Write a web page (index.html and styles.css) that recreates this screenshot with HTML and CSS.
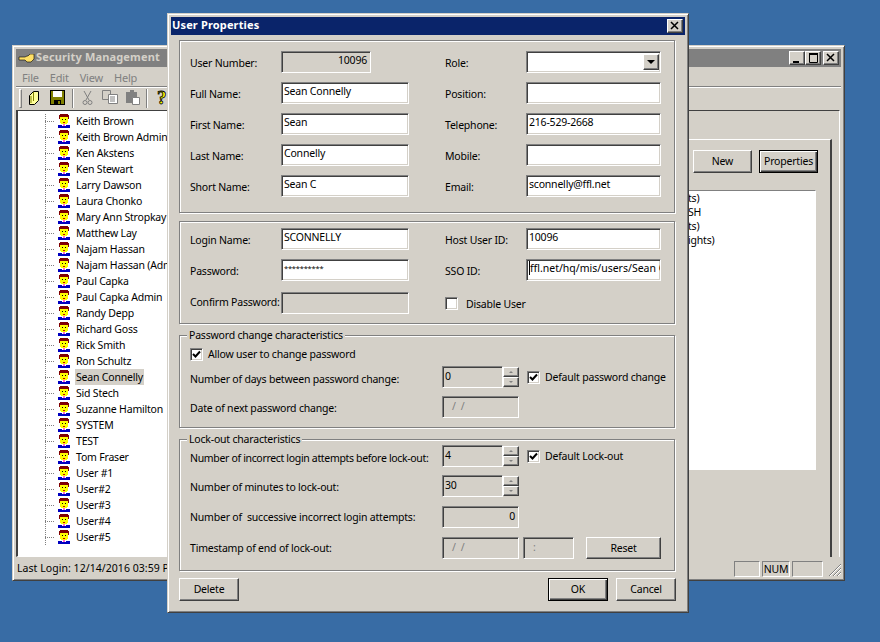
FILE: index.html
```html
<!DOCTYPE html>
<html lang="en">
<head>
<meta charset="utf-8">
<title>User Properties</title>
<link rel="stylesheet" href="styles.css">
</head>
<body>
<svg class="defs" width="0" height="0" aria-hidden="true">
  <symbol id="person" viewBox="0 0 14 14">
    <path fill="#800000" d="M3 0h8v1h1v4h-1V3H3v2H2V1h1z"/>
    <path fill="#ffff00" d="M3 3h8v6h-1v1H4V9H3z"/>
    <path fill="#000" d="M5 5h1v1H5zM8 5h1v1H8z"/>
    <path fill="#c00000" d="M6 8h2v1H6z"/>
    <path fill="#0000c0" d="M1 11h4v1h4v-1h4v3H1z"/>
    <path fill="#ff66cc" d="M6 10h2v2H6z"/>
  </symbol>
</svg>

<section class="win main">
  <header class="title inactive">
    <svg class="key" width="17" height="9" viewBox="0 0 17 9"><path fill="#ffe066" stroke="#000" stroke-width=".6" d="M1 3h6l2-1h1l2-2h4v5l-3 3H9L7 6H1z"/></svg>
    <span class="title-text">Security Management</span>
    <span class="caption-btns">
      <span class="cap">
        <svg width="14" height="12" viewBox="0 0 14 12"><path d="M3 9h6v2H3z"/></svg>
      </span>
      <span class="cap">
        <svg width="14" height="12" viewBox="0 0 14 12"><path fill="none" stroke="#000" d="M3.5 2.5h8v8h-8z"/><path d="M3 1h9v2H3z"/></svg>
      </span>
      <span class="cap cap-close">
        <svg width="14" height="12" viewBox="0 0 14 12"><path stroke="#000" stroke-width="1.5" d="M3 2l7 7M10 2l-7 7"/></svg>
      </span>
    </span>
  </header>
  <nav class="menu"><span>File</span><span>Edit</span><span>View</span><span>Help</span></nav>
  <div class="toolbar">
    <span class="grip"></span>
    <svg class="tool t-open" width="12" height="16" viewBox="0 0 12 16"><path fill="#ffff99" stroke="#000" d="M1.500 5.500l4-4h5v9l-4 4h-5z"/><path fill="none" stroke="#808000" d="M5.500 2v9M3 6v7"/></svg>
    <svg class="tool t-save" width="15" height="15" viewBox="0 0 15 15"><path fill="#000" d="M0 0h15v15H0z"/><path fill="#808000" d="M1 1h13v13H1z"/><path fill="#fff" d="M3 1h9v6H3z"/><path fill="#000" d="M4 10h7v4H4z"/><path fill="#808000" d="M8 11h2v3H8z"/></svg>
    <span class="tsep s1"></span>
    <svg class="tool t-cut" width="11" height="16" viewBox="0 0 11 16"><path fill="none" stroke="#808080" d="M2 1l5 9M9 1L4 10"/><circle cx="3" cy="12.500" r="2" fill="none" stroke="#808080"/><circle cx="8" cy="12.500" r="2" fill="none" stroke="#808080"/></svg>
    <svg class="tool t-copy" width="16" height="14" viewBox="0 0 16 14"><path fill="#d4d0c8" stroke="#808080" d="M.5.5h8v9h-8z"/><path fill="#fff" stroke="#808080" d="M6.500 4.500h9v9h-9z"/><path stroke="#808080" d="M8 7h5M8 9h5M8 11h5"/></svg>
    <svg class="tool t-paste" width="15" height="15" viewBox="0 0 15 15"><path fill="#808080" d="M1 2h4V0h4v2h3v11H1z"/><path fill="#fff" stroke="#808080" d="M7.500 7.500h7v7h-7z"/></svg>
    <span class="tsep s2"></span>
    <span class="help">?</span>
  </div>
  <div class="client">
    <div class="tree">
      <ul class="tree-list">
        <li><svg><use href="#person"/></svg><span>Keith Brown</span></li>
        <li><svg><use href="#person"/></svg><span>Keith Brown Admin</span></li>
        <li><svg><use href="#person"/></svg><span>Ken Akstens</span></li>
        <li><svg><use href="#person"/></svg><span>Ken Stewart</span></li>
        <li><svg><use href="#person"/></svg><span>Larry Dawson</span></li>
        <li><svg><use href="#person"/></svg><span>Laura Chonko</span></li>
        <li><svg><use href="#person"/></svg><span>Mary Ann Stropkay</span></li>
        <li><svg><use href="#person"/></svg><span>Matthew Lay</span></li>
        <li><svg><use href="#person"/></svg><span>Najam Hassan</span></li>
        <li><svg><use href="#person"/></svg><span>Najam Hassan (Admin)</span></li>
        <li><svg><use href="#person"/></svg><span>Paul Capka</span></li>
        <li><svg><use href="#person"/></svg><span>Paul Capka Admin</span></li>
        <li><svg><use href="#person"/></svg><span>Randy Depp</span></li>
        <li><svg><use href="#person"/></svg><span>Richard Goss</span></li>
        <li><svg><use href="#person"/></svg><span>Rick Smith</span></li>
        <li><svg><use href="#person"/></svg><span>Ron Schultz</span></li>
        <li class="sel"><svg><use href="#person"/></svg><span>Sean Connelly</span></li>
        <li><svg><use href="#person"/></svg><span>Sid Stech</span></li>
        <li><svg><use href="#person"/></svg><span>Suzanne Hamilton</span></li>
        <li><svg><use href="#person"/></svg><span>SYSTEM</span></li>
        <li><svg><use href="#person"/></svg><span>TEST</span></li>
        <li><svg><use href="#person"/></svg><span>Tom Fraser</span></li>
        <li><svg><use href="#person"/></svg><span>User #1</span></li>
        <li><svg><use href="#person"/></svg><span>User#2</span></li>
        <li><svg><use href="#person"/></svg><span>User#3</span></li>
        <li><svg><use href="#person"/></svg><span>User#4</span></li>
        <li><svg><use href="#person"/></svg><span>User#5</span></li>
      </ul>
    </div>
    <div class="pane">
      <div class="tabpage">
        <div class="panel">
          <div class="panel-btns">
            <span class="btn pbtn">New</span>
            <span class="btn pbtn default">Properties</span>
          </div>
          <div class="listbox">
            <div>ts)</div><div>SH</div><div>ts)</div><div>ights)</div>
          </div>
        </div>
      </div>
    </div>
  </div>
  <footer class="status">
    <span class="status-main">Last Login: 12/14/2016 03:59 PM</span>
    <span class="spanel p1"></span>
    <span class="spanel p2">NUM</span>
    <span class="spanel p3"></span>
    <svg class="size-grip" width="12" height="12" viewBox="0 0 12 12"><path stroke="#808080" d="M0 12L12 0M4 12l8-8M8 12l4-4"/><path stroke="#fff" d="M1 12L12 1M5 12l7-7M9 12l3-3"/></svg>
  </footer>
</section>

<section class="win dialog">
  <header class="title active">
    <span class="title-text">User Properties</span>
    <span class="caption-btns">
      <span class="cap cap-dlg">
        <svg width="14" height="12" viewBox="0 0 14 12"><path stroke="#000" stroke-width="1.5" d="M3 2l7 7M10 2l-7 7"/></svg>
      </span>
    </span>
  </header>
  <div class="dlg-body">
    <div class="group g-user">
      <div class="col">
        <label>User Number:</label><div class="field disabled num">10096</div>
        <label>Full Name:</label><div class="field">Sean Connelly</div>
        <label>First Name:</label><div class="field">Sean</div>
        <label>Last Name:</label><div class="field">Connelly</div>
        <label>Short Name:</label><div class="field">Sean C</div>
      </div>
      <div class="col col-r">
        <label>Role:</label><div class="field combo"><span class="combo-btn"><i class="arrow"></i></span></div>
        <label>Position:</label><div class="field"></div>
        <label>Telephone:</label><div class="field">216-529-2668</div>
        <label>Mobile:</label><div class="field"></div>
        <label>Email:</label><div class="field">sconnelly@ffl.net</div>
      </div>
    </div>
    <div class="group g-login">
      <div class="col">
        <label>Login Name:</label><div class="field">SCONNELLY</div>
        <label>Password:</label><div class="field pw">**********</div>
        <label>Confirm Password:</label><div class="field disabled confirm"></div>
      </div>
      <div class="col col-r">
        <label>Host User ID:</label><div class="field">10096</div>
        <label>SSO ID:</label><div class="field sso"><span class="caret">ffl.net/hq/mis/users/Sean C</span></div>
        <div class="check-row"><span class="check"></span><span>Disable User</span></div>
      </div>
    </div>
    <fieldset class="fgroup g-pass">
      <legend>Password change characteristics</legend>
      <div class="check-row allow"><span class="check on"><svg width="11" height="11" viewBox="0 0 11 11"><path fill="none" stroke="#000" stroke-width="2" d="M2 5l2.500 2.500L9 2.500"/></svg></span><span>Allow user to change password</span></div>
      <div class="row">
        <label class="low">Number of days between password change:</label>
        <div class="spin"><div class="field disabled">0</div><div class="spin-btns"><span class="sb"><i class="up"></i></span><span class="sb"><i class="down"></i></span></div></div>
        <div class="check-row"><span class="check on"><svg width="11" height="11" viewBox="0 0 11 11"><path fill="none" stroke="#000" stroke-width="2" d="M2 5l2.500 2.500L9 2.500"/></svg></span><span>Default password change</span></div>
      </div>
      <div class="row">
        <label>Date of next password change:</label>
        <div class="field disabled date">/ &nbsp;/</div>
      </div>
    </fieldset>
    <fieldset class="fgroup g-lock">
      <legend>Lock-out characteristics</legend>
      <div class="row">
        <label class="tight low">Number of incorrect login attempts before lock-out:</label>
        <div class="spin"><div class="field disabled">4</div><div class="spin-btns"><span class="sb"><i class="up"></i></span><span class="sb"><i class="down"></i></span></div></div>
        <div class="check-row"><span class="check on"><svg width="11" height="11" viewBox="0 0 11 11"><path fill="none" stroke="#000" stroke-width="2" d="M2 5l2.500 2.500L9 2.500"/></svg></span><span>Default Lock-out</span></div>
      </div>
      <div class="row">
        <label>Number of minutes to lock-out:</label>
        <div class="spin"><div class="field disabled">30</div><div class="spin-btns"><span class="sb"><i class="up"></i></span><span class="sb"><i class="down"></i></span></div></div>
      </div>
      <div class="row">
        <label class="high">Number of &nbsp;successive incorrect login attempts:</label>
        <div class="field disabled num date">0</div>
      </div>
      <div class="row">
        <label class="high">Timestamp of end of lock-out:</label>
        <div class="field disabled date dim">/ &nbsp;/</div>
        <div class="field disabled time dim">:</div>
        <span class="btn reset">Reset</span>
      </div>
    </fieldset>
    <div class="dlg-actions">
      <span class="btn">Delete</span>
      <span class="actions-right">
        <span class="btn default">OK</span>
        <span class="btn">Cancel</span>
      </span>
    </div>
  </div>
</section>
</body>
</html>
```

FILE: styles.css
```css
* { box-sizing: border-box; }
html, body { margin: 0; height: 100%; }
body {
  position: relative;
  width: 880px;
  height: 642px;
  overflow: hidden;
  background: #386ca5;
  font: 10.500px/13px "Noto Sans", Tahoma, sans-serif;
  letter-spacing: -.2px;
  color: #000;
}
.defs { position: absolute; }
label { white-space: nowrap; padding-top: 2px; }
label.low { padding-top: 5px; }
label.high { padding-top: 1px; }
.tight { letter-spacing: -.33px; }

/* windows */
.win {
  position: absolute;
  display: flex;
  flex-direction: column;
  background: #d4d0c8;
  border: 1px solid;
  border-color: #d4d0c8 #404040 #404040 #d4d0c8;
  box-shadow: inset 1px 1px 0 #fff, inset -1px -1px 0 #808080;
  padding: 3px;
}
.main { left: 12px; top: 45px; width: 833px; height: 536px; }
.dialog { left: 167px; top: 13px; width: 522px; height: 600px; }

.title {
  flex: none;
  display: flex;
  align-items: center;
  height: 18px;
  padding: 0 2px 0 1px;
  font-weight: bold;
  font-size: 11px;
  letter-spacing: .15px;
}
.title-text { padding-bottom: 3px; }
.title.active { background: #0a246a; color: #fff; }
.title.inactive { background: #808080; color: #d4d0c8; padding-left: 2px; }
.key { margin-right: 1px; }
.caption-btns { margin-left: auto; display: flex; }
.cap {
  width: 16px;
  height: 14px;
  background: #d4d0c8;
  border: 1px solid;
  border-color: #fff #404040 #404040 #fff;
  box-shadow: inset -1px -1px 0 #808080;
  display: block;
}
.cap svg { display: block; margin-top: 0; }
.cap-close { margin-left: 2px; }

/* main chrome */
.menu {
  flex: none;
  display: flex;
  height: 20px;
  align-items: center;
  padding: 1px 0 0 6px;
  color: #808080;
  font-size: 11px;
  border-bottom: 1px solid #808080;
  box-shadow: 0 1px 0 #fff;
}
.menu span { margin-right: 11px; }
.toolbar {
  flex: none;
  position: relative;
  height: 23px;
}
.grip {
  position: absolute; left: 3px; top: 2px;
  width: 3px; height: 19px;
  border: 1px solid; border-color: #fff #808080 #808080 #fff;
}
.tool { position: absolute; }
.t-open { left: 12px; top: 3px; }
.t-save { left: 34px; top: 3px; }
.t-cut { left: 66px; top: 3px; }
.t-copy { left: 86px; top: 3px; }
.t-paste { left: 109px; top: 3px; }
.tsep { position: absolute; top: 2px; width: 2px; height: 19px; border-left: 1px solid #808080; border-right: 1px solid #fff; }
.s1 { left: 56px; }
.s2 { left: 130px; }
.help {
  position: absolute; left: 141px; top: 1px;
  font: bold 19px/20px "Liberation Serif", serif;
  color: #ffff00;
  -webkit-text-stroke: .8px #000;
}
.client { flex: 1; display: flex; min-height: 0; position: relative; }
.tree {
  width: 500px;
  background: #fff;
  border: 1px solid;
  border-color: #404040 #fff #fff #404040;
  border-left-width: 2px;
  overflow: hidden;
  flex: none;
}
.tree-list { list-style: none; margin: 0; padding: 2px 0 0 27px; border-left: 0; }
.tree-list li {
  height: 16px;
  display: flex;
  align-items: center;
  padding-left: 12px;
  background:
    repeating-linear-gradient(90deg, #808080 0 1px, transparent 1px 2px) 0 50% / 10px 1px no-repeat,
    repeating-linear-gradient(0deg, #808080 0 1px, transparent 1px 2px) 0 0 / 1px 100% no-repeat;
  white-space: nowrap;
}
.tree-list svg { width: 14px; height: 14px; flex: none; margin-right: 4px; }
.tree-list span { padding: 1px 1px; height: 16px; line-height: 14px; }
.tree-list .sel span { background: #d4d0c8; }
.pane { flex: 1; display: flex; flex-direction: column; padding-top: 0; }
.tabpage {
  flex: 1;
  margin: 0 1px 0 0;
  border-top: 1px solid #404040;
  border-right: 1px solid #fff;
  padding: 28px 7px 0 0;
  display: flex;
}
.panel {
  flex: 1;
  border-top: 1px solid #fff;
  border-right: 2px solid #404040;
  padding: 10px 14px 0 0;
  display: flex;
  flex-direction: column;
  align-items: flex-end;
}
.panel-btns { display: flex; gap: 7px; margin-right: -2px; }
.btn.pbtn { width: 59px; height: 23px; }
.listbox {
  margin: 17px 0 0;
  width: 200px;
  height: 280px;
  background: #fff;
  border: 1px solid;
  border-color: #808080 #fff #fff #808080;
  padding: 0 0 0 71px;
  line-height: 14px;
}
.status {
  flex: none;
  height: 20px;
  position: relative;
  display: flex;
  align-items: center;
  padding: 3px 0 0 1px;
  white-space: nowrap;
}
.status-main { letter-spacing: .05px; }
.spanel {
  position: absolute; top: 4px; height: 16px;
  border: 1px solid; border-color: #808080 #fff #fff #808080;
  text-align: center; line-height: 14px;
}
.p1 { left: 718px; width: 26px; }
.p2 { left: 746px; width: 28px; }
.p3 { left: 776px; width: 31px; }
.size-grip { position: absolute; right: 0; bottom: 1px; }

/* dialog */
.dlg-body {
  flex: 1;
  display: flex;
  flex-direction: column;
  padding: 5px 10px 0 8px;
}
.group, .fgroup {
  border: 1px solid #808080;
  box-shadow: 1px 1px 0 #fff, inset 1px 1px 0 #fff;
  margin: 0;
  min-width: 0;
}
.group { display: flex; padding-left: 10px; }
.g-user { height: 173px; padding-top: 10px; }
.g-login { height: 103px; margin-top: 8px; padding-top: 6px; }
.col {
  display: grid;
  grid-template-columns: 91px 128px;
  grid-auto-rows: 22px;
  row-gap: 9px;
  align-items: center;
}
.col-r { grid-template-columns: 81px 135px; margin-left: 36px; }
.confirm { margin-top: 4px; }
.check-row { grid-column: 1 / -1; display: flex; align-items: center; white-space: nowrap; }
.g-login .check-row { margin-top: 4px; }
.g-login .check-row > span:last-child { padding-top: 2px; }

.field {
  height: 22px;
  background: #fff;
  border: 1px solid;
  border-color: #808080 #fff #fff #808080;
  box-shadow: inset 1px 1px 0 #404040, inset -1px -1px 0 #d4d0c8;
  padding: 1px 2px 0 2px;
  line-height: 14px;
  white-space: nowrap;
  overflow: hidden;
  position: relative;
}
.field.disabled { background: #d4d0c8; }
.row .field { padding-top: 2px; }
.num { text-align: right; padding-right: 3px; }
.g-user .col:first-child .num { width: 90px; }
.pw { font-size: 7.500px; }
.sso { letter-spacing: 0; }
.caret { border-left: 1px solid #000; }
.combo-btn {
  position: absolute; right: 1px; top: 2px;
  width: 16px; height: 16px;
  background: #d4d0c8;
  border: 1px solid; border-color: #fff #404040 #404040 #fff;
  box-shadow: inset -1px -1px 0 #808080;
  display: flex; align-items: center; justify-content: center;
}
.arrow { border: 4px solid transparent; border-top: 4px solid #000; border-bottom: 0; }

.check {
  width: 13px; height: 13px;
  background: #fff;
  border: 1px solid; border-color: #808080 #fff #fff #808080;
  box-shadow: inset 1px 1px 0 #404040, inset -1px -1px 0 #d4d0c8;
  margin-right: 8px;
  flex: none;
  display: flex;
}
.check svg { display: block; margin-left: 0; }
.row .check, .allow .check { margin-right: 5px; }

/* fieldsets */
.fgroup { display: block; padding: 0 0 0 10px; }
.fgroup legend {
  margin-left: -3px;
  padding: 0 2px;
  background: #d4d0c8;
  line-height: 13px;
}
.g-pass { height: 99px; margin-top: 5px; padding-top: 6px; }
.g-lock { height: 138px; margin-top: 5px; padding-top: 0; }
.row { display: flex; align-items: center; height: 22px; margin-top: 8px; white-space: nowrap; }
.g-pass .row:nth-of-type(2) { margin-top: 5px; }
.g-lock .row:first-of-type { margin-top: -1px; }
.g-lock .row:nth-of-type(n+3) { margin-top: 9px; }
.row label { width: 252px; flex: none; }
.spin { display: flex; width: 77px; margin-right: 8px; flex: none; }
.spin .field { width: 61px; }
.spin-btns { width: 16px; display: flex; flex-direction: column; justify-content: space-between; padding: 1px 0; }
.sb {
  height: 10px;
  background: #d4d0c8;
  border: 1px solid; border-color: #fff #404040 #404040 #fff;
  box-shadow: inset -1px -1px 0 #808080;
  display: flex; align-items: center; justify-content: center;
}
.up { border: 2px solid transparent; border-bottom: 2px solid #808080; border-top: 0; }
.down { border: 2px solid transparent; border-top: 2px solid #808080; border-bottom: 0; }
.date { width: 77px; color: #808080; padding-left: 9px; }
.date.num { color: #000; padding-left: 3px; }
.time { width: 51px; margin-left: 4px; color: #808080; padding-left: 9px; }

/* buttons */
.btn {
  display: flex;
  align-items: center;
  justify-content: center;
  width: 60px;
  height: 23px;
  background: #d4d0c8;
  border: 1px solid;
  border-color: #fff #404040 #404040 #fff;
  box-shadow: inset -1px -1px 0 #808080;
  flex: none;
}
.btn.reset { margin-left: 12px; width: 75px; height: 22px; }
.btn.default {
  border: 1px solid #000;
  box-shadow: inset 1px 1px 0 #fff, inset -1px -1px 0 #404040, inset -2px -2px 0 #808080;
}
.dlg-actions {
  display: flex;
  justify-content: space-between;
  margin-top: 7px;
}
.actions-right { display: flex; gap: 8px; margin-right: -1px; }
```
